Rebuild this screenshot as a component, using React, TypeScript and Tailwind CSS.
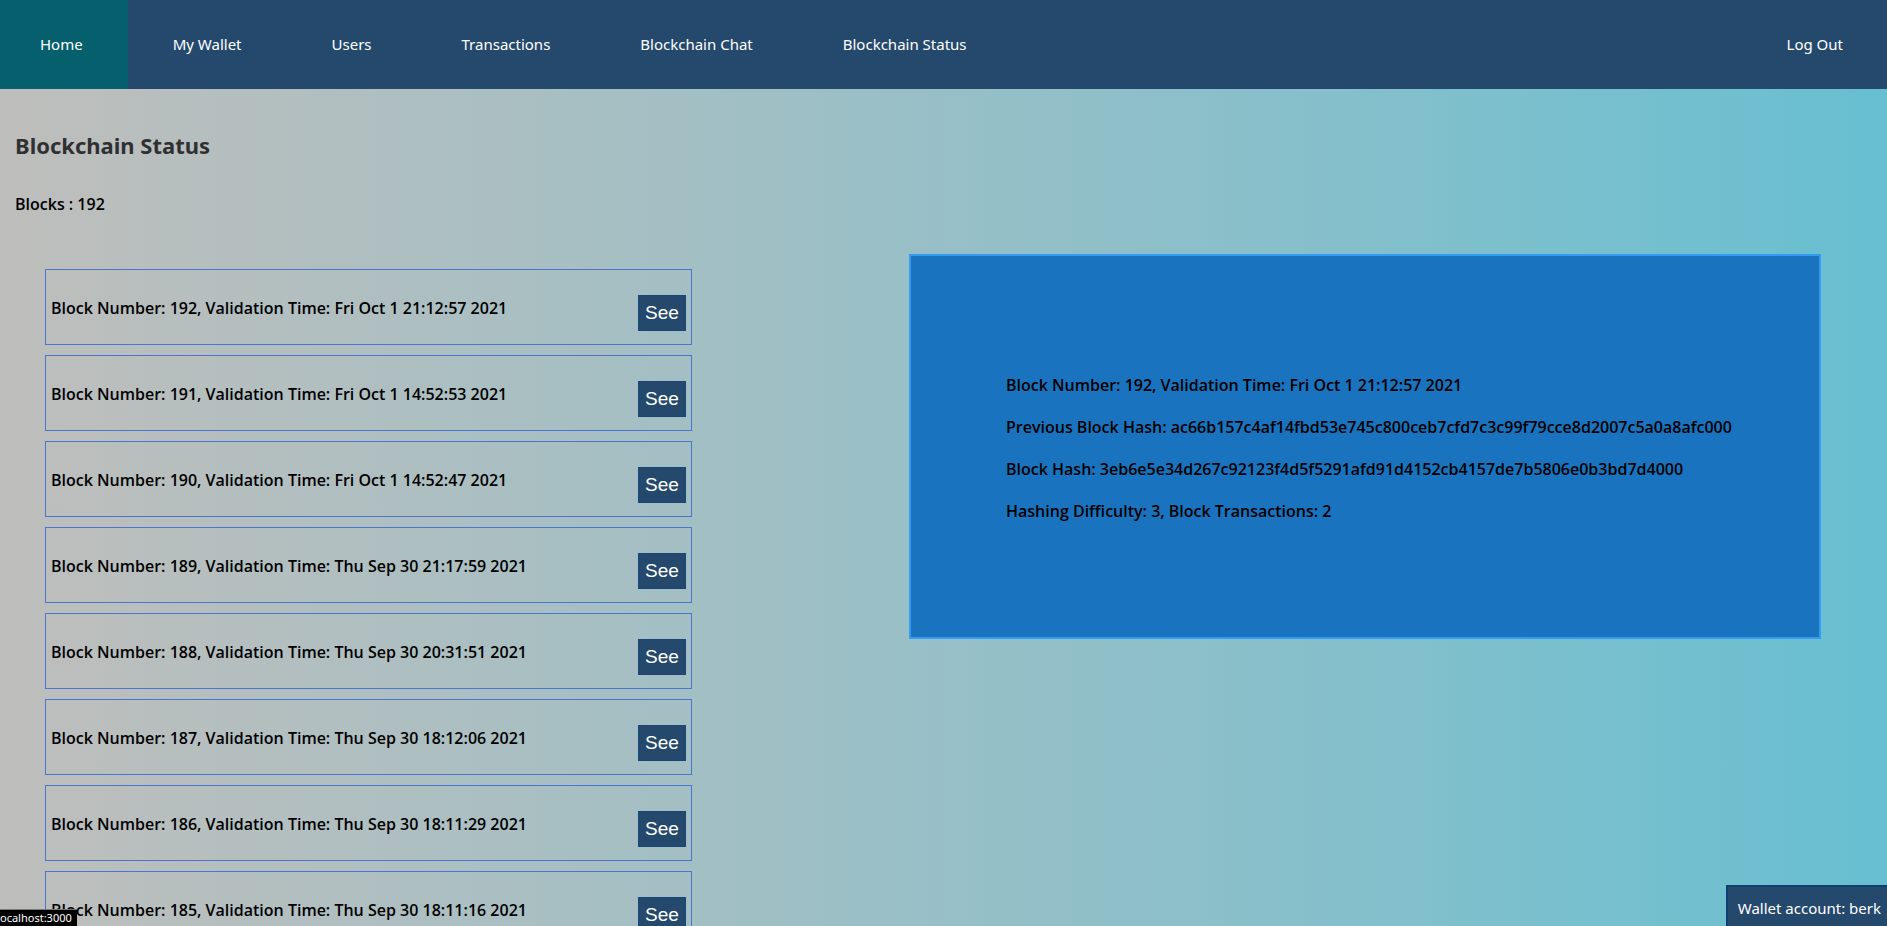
const navItems = ["My Wallet", "Users", "Transactions", "Blockchain Chat", "Blockchain Status"];

const blocks = [
  { number: 192, time: "Fri Oct 1 21:12:57 2021" },
  { number: 191, time: "Fri Oct 1 14:52:53 2021" },
  { number: 190, time: "Fri Oct 1 14:52:47 2021" },
  { number: 189, time: "Thu Sep 30 21:17:59 2021" },
  { number: 188, time: "Thu Sep 30 20:31:51 2021" },
  { number: 187, time: "Thu Sep 30 18:12:06 2021" },
  { number: 186, time: "Thu Sep 30 18:11:29 2021" },
  { number: 185, time: "Thu Sep 30 18:11:16 2021" },
];

const details = [
  "Block Number: 192, Validation Time: Fri Oct 1 21:12:57 2021",
  "Previous Block Hash: ac66b157c4af14fbd53e745c800ceb7cfd7c3c99f79cce8d2007c5a0a8afc000",
  "Block Hash: 3eb6e5e34d267c92123f4d5f5291afd91d4152cb4157de7b5806e0b3bd7d4000",
  "Hashing Difficulty: 3, Block Transactions: 2",
];

function NavBar() {
  return (
    <nav className="flex h-[89px] shrink-0 bg-[#25496d] text-[15px] text-white">
      <a href="#home" className="flex items-center bg-[#065f6c] pr-[45px] pl-10">
        Home
      </a>
      {navItems.map((item) => (
        <a key={item} href="#page" className="flex items-center px-[45px]">
          {item}
        </a>
      ))}
      <a href="#logout" className="ml-auto flex items-center px-11">
        Log Out
      </a>
    </nav>
  );
}

function BlockRow({ number, time }: { number: number; time: string }) {
  return (
    <li className="flex items-start justify-between border border-[#4a76d2] px-[5px] pt-[25px] pb-[13px]">
      <h4 className="font-['Open_Sans',sans-serif] text-base leading-[26px] font-semibold">
        Block Number: {number}, Validation Time: {time}
      </h4>
      <button
        type="button"
        className="h-9 w-12 border border-[#18467a] bg-[#25496d] font-['Liberation_Sans',sans-serif] text-[19px] leading-6 text-white"
      >
        See
      </button>
    </li>
  );
}

export default function App() {
  return (
    <div className="flex h-screen flex-col overflow-hidden bg-linear-to-r from-[#bebebc] to-[#67bfd1] font-['Noto_Sans',sans-serif] text-black">
      <NavBar />
      <main className="min-h-0 flex-1 overflow-y-auto [scrollbar-width:none]">
        <header className="px-[15px] pt-[38px]">
          <h2 className="text-[22px] leading-9 font-bold text-[#303033]">Blockchain Status</h2>
          <h4 className="mt-7 font-['Open_Sans',sans-serif] text-base leading-[26px] font-semibold">
            Blocks : 192
          </h4>
        </header>
        <div className="mt-[37px] grid grid-cols-[647fr_912fr] items-start gap-[217px] pr-[66px] pl-[45px]">
          <ul className="flex flex-col gap-[10px] pt-[15px]">
            {blocks.map((block) => (
              <BlockRow key={block.number} number={block.number} time={block.time} />
            ))}
          </ul>
          <section className="flex flex-col gap-4 border-2 border-[#339bf2] bg-[#1973bf] pt-[116px] pb-[113px] pl-[95px] font-['Open_Sans',sans-serif] text-base leading-[26px] font-semibold">
            {details.map((line) => (
              <h4 key={line}>{line}</h4>
            ))}
          </section>
        </div>
      </main>
      <div className="fixed right-0 bottom-0 border-t-2 border-l-2 border-[#10406f] bg-[#25496d] pt-[9px] pr-[6px] pb-[6px] pl-[10px] text-[15px] leading-6 text-white">
        Wallet account: berk
      </div>
      <div className="fixed bottom-0 left-0 border-t border-[#777777] bg-black pr-[5px] text-[11px] leading-4 text-white">
        ocalhost:3000
      </div>
    </div>
  );
}
